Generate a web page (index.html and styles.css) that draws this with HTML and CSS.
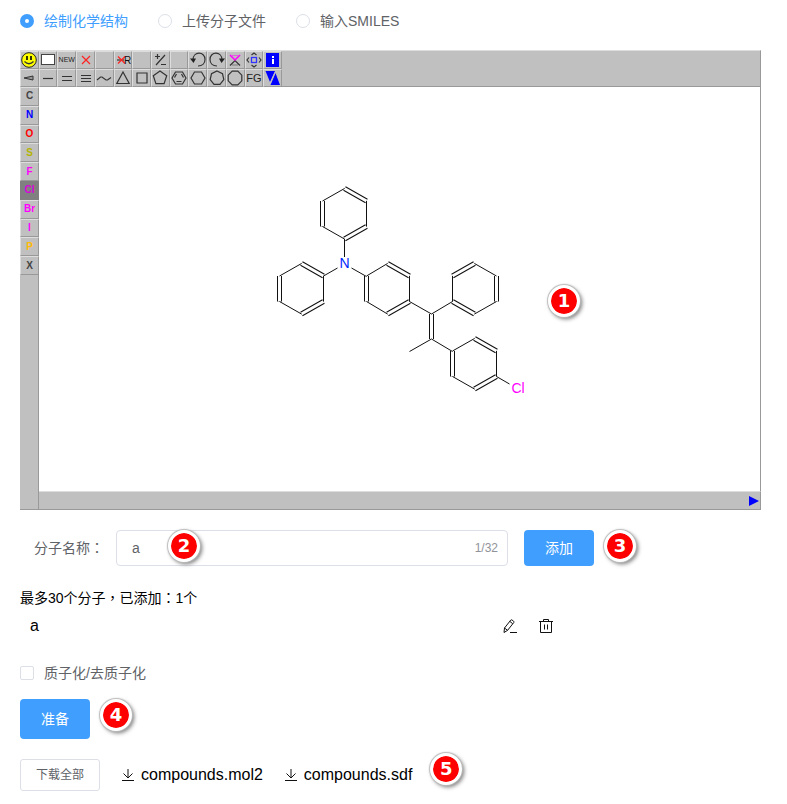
FILE: index.html
```html
<!DOCTYPE html>
<html lang="zh-CN">
<head>
<meta charset="utf-8">
<meta name="viewport" content="width=device-width, initial-scale=1">
<title>分子准备</title>
<link rel="stylesheet" href="styles.css">
</head>
<body>
<main class="page">
  <div class="radios">
    <label class="choice"><input type="radio" name="source" checked><span>绘制化学结构</span></label>
    <label class="choice"><input type="radio" name="source"><span>上传分子文件</span></label>
    <label class="choice"><input type="radio" name="source"><span>输入SMILES</span></label>
  </div>

  <section class="editor">
    <div class="editor-top">
      <div class="tools">
        <button type="button" class="tool" aria-label="SMILES"><svg viewBox="0 0 18 18"><circle cx="9" cy="9" r="7.3" fill="#ff0" stroke="#222"/><path d="M7 5v4M11 5v4" stroke="#000" stroke-width="1.6"/><path d="M4.5 10.5q4.5 4.500 9 0" class="ln"/></svg></button>
        <button type="button" class="tool" aria-label="Query"><svg viewBox="0 0 18 18"><rect x="2.500" y="3.500" width="13" height="10" fill="#fff" stroke="#444"/></svg></button>
        <button type="button" class="tool tiny">NEW</button>
        <button type="button" class="tool" aria-label="Clear"><svg viewBox="0 0 18 18"><path d="M5 5l8 8M13 5l-8 8" class="red"/></svg></button>
        <span class="tool"></span>
        <button type="button" class="tool" aria-label="Delete group"><svg viewBox="0 0 18 18"><path d="M3 9h7" class="ln"/><path d="M4 5.500l7 7M11 5.500l-7 7" class="red"/><text x="10" y="13" class="glyph">R</text></svg></button>
        <span class="tool"></span>
        <button type="button" class="tool" aria-label="Charge"><svg viewBox="0 0 18 18"><path d="M14 4L5 14M4 5.500h5M6.500 3v5M10 13.500h5" class="ln"/></svg></button>
        <span class="tool"></span>
        <button type="button" class="tool" aria-label="Undo"><svg viewBox="0 0 18 18"><path d="M4 9C4 0 16 0 16 8.500C16 12 13.500 15 9 15" class="ln"/><path d="M1 7.500h6L4.500 12z" fill="#222"/></svg></button>
        <button type="button" class="tool" aria-label="Redo"><svg viewBox="0 0 18 18"><path d="M14 9C14 0 2 0 2 8.500C2 12 4.500 15 9 15" class="ln"/><path d="M17 7.500h-6L13.500 12z" fill="#222"/></svg></button>
        <button type="button" class="tool" aria-label="Spiro"><svg viewBox="0 0 18 18"><path d="M4 14.500L9 9.500l5 5" class="ln"/><path d="M4 4l5 5 5-5" fill="none" stroke="#f0f" stroke-width="1.500"/><path d="M6.500 4.500h5" stroke="#f0f" stroke-dasharray="1 1"/><path d="M6.500 14h5" class="ln" stroke-dasharray="1 1"/></svg></button>
        <button type="button" class="tool" aria-label="Move"><svg viewBox="0 0 18 18"><rect x="6.500" y="6.500" width="5" height="5" fill="none" stroke="#33f" stroke-width="1.300"/><path d="M6.500 4L9 2l2.500 2M6.500 14L9 16l2.500-2M4 6.500L2 9l2 2.500M14 6.500L16 9l-2 2.500" class="ln"/></svg></button>
        <button type="button" class="tool" aria-label="Info"><svg viewBox="0 0 18 18"><path d="M2 2h13v14H2z" fill="#00f"/><path d="M9 5v2M9 8v5" stroke="#fff" stroke-width="2"/></svg></button>

        <button type="button" class="tool" aria-label="Stereo bond"><svg viewBox="0 0 18 18"><path d="M4 9l9-2v4z" fill="#999" stroke="#333"/></svg></button>
        <button type="button" class="tool" aria-label="Single bond"><svg viewBox="0 0 18 18"><path d="M4 9.500h10" class="ln"/></svg></button>
        <button type="button" class="tool" aria-label="Double bond"><svg viewBox="0 0 18 18"><path d="M4 7.500h10M4 11.500h10" class="ln"/></svg></button>
        <button type="button" class="tool" aria-label="Triple bond"><svg viewBox="0 0 18 18"><path d="M4 6.500h10M4 9.500h10M4 12.500h10" class="ln"/></svg></button>
        <button type="button" class="tool" aria-label="Chain"><svg viewBox="0 0 18 18"><path d="M2 11l3.500-3h1.500l4 3h1.500L16 8.500" class="ln"/></svg></button>
        <button type="button" class="tool" aria-label="Ring 3"><svg viewBox="0 0 18 18"><path d="M9 3l6.200 11.500H2.800z" class="ln"/></svg></button>
        <button type="button" class="tool" aria-label="Ring 4"><svg viewBox="0 0 18 18"><path d="M4 4h10v10H4z" class="ln"/></svg></button>
        <button type="button" class="tool" aria-label="Ring 5"><svg viewBox="0 0 18 18"><path d="M9 2l6.700 4.800-2.600 7.900H4.900L2.300 6.800z" class="ln"/></svg></button>
        <button type="button" class="tool" aria-label="Benzene"><svg viewBox="0 0 18 18"><path d="M16 9l-3.500-6h-7L2 9l3.500 6h7zM4.500 8.500l2-3.500M11.500 5l2 3.500M6.500 12.500h5" class="ln"/></svg></button>
        <button type="button" class="tool" aria-label="Ring 6"><svg viewBox="0 0 18 18"><path d="M16 9l-3.500-6h-7L2 9l3.500 6h7z" class="ln"/></svg></button>
        <button type="button" class="tool" aria-label="Ring 7"><svg viewBox="0 0 18 18"><path d="M9 2l5.500 2.600 1.300 6-3.800 4.700H6l-3.800-4.700 1.300-6z" class="ln"/></svg></button>
        <button type="button" class="tool" aria-label="Ring 8"><svg viewBox="0 0 18 18"><path d="M6.200 2.200h5.600l4 4v5.600l-4 4H6.200l-4-4V6.200z" class="ln"/></svg></button>
        <button type="button" class="tool">FG</button>
        <button type="button" class="tool" aria-label="JME"><svg viewBox="0 0 18 18"><path d="M1.500 2h9.500L6 13zM6.500 16H16L11.500 4z" fill="#00f"/><path d="M11.500 2.500L6 15" stroke="#c0c0c0"/></svg></button>
      </div>
    </div>
    <div class="editor-side">
      <div class="atoms">
        <button type="button" class="tool atom">C</button>
        <button type="button" class="tool atom n">N</button>
        <button type="button" class="tool atom o">O</button>
        <button type="button" class="tool atom s">S</button>
        <button type="button" class="tool atom hal">F</button>
        <button type="button" class="tool atom hal active">Cl</button>
        <button type="button" class="tool atom hal">Br</button>
        <button type="button" class="tool atom hal">I</button>
        <button type="button" class="tool atom p">P</button>
        <button type="button" class="tool atom">X</button>
      </div>
    </div>
    <div class="canvas">
      <svg viewBox="39 87 721 404" role="img" aria-label="molecule">
        <defs>
          <path id="double-bonds" d="M344.500 188.500l22 12.500M366.500 226.500l-22 12.500M322.500 226.500V201
            M301.500 263.500l22 12.500M323.500 301.500l-22 12.500M279.500 301.500V276
            M387.500 263.500l22 12.500M409.500 301.500l-22 12.500M366.500 301.500V276
            M452.500 276l22-12.500M496.500 276v25.500M474.500 314l-22-12.500
            M474.500 338.500l22 12.500M496.500 376.500l-22 12.500M452.500 376.500V351
            M431.500 314v25"/>
        </defs>
        <use href="#double-bonds" class="bond-outer"/>
        <use href="#double-bonds" class="bond-inner"/>
        <path class="bond" d="M322.500 201l22-12.500M366.500 201v25.500M344.500 239l-22-12.500M344.500 239v18
          M279.500 276l22-12.500M323.500 276v25.500M301.500 314l-22-12.500M323.500 276l14-8
          M351.500 268l15 8.500M366.500 276l21-12.500M409.500 276v25.500M387.500 314l-21-12.500
          M409.500 301.500l22 12.500 21-12.500M452.500 301.500V276M474.500 263.500l22 12.500M496.500 301.500l-22 12.500
          M409.500 351.500l22-12.500 21 12.500M452.500 351l22-12.500M496.500 351v25.500M474.500 389l-22-12.500M496.500 376.500l13 7.500"/>
        <text x="344.500" y="268" text-anchor="middle" class="atom-n">N</text>
        <text x="511.500" y="393" class="atom-cl">Cl</text>
      </svg>
      <span class="badge badge-canvas">1</span>
    </div>
    <div class="editor-status"><svg viewBox="0 0 10 10"><path d="M0 0l10 5-10 5z" fill="#00f"/></svg></div>
  </section>

  <form class="name-row">
    <label class="name-label" for="mol-name">分子名称<span class="punct" lang="zh-TW">：</span></label>
    <div class="name-box">
      <input id="mol-name" type="text" value="a" maxlength="32">
      <span class="count">1/32</span>
      <span class="badge badge-name">2</span>
    </div>
    <div class="marked">
      <button type="button" class="btn primary">添加</button>
      <span class="badge">3</span>
    </div>
  </form>

  <p class="summary">最多30个分子<span class="punct" lang="zh-TW">，</span>已添加<span class="punct" lang="zh-TW">：</span>1个</p>
  <div class="item">
    <span>a</span>
    <div class="item-actions">
      <button type="button" class="icon-btn" aria-label="编辑"><svg viewBox="0 0 14 14"><path d="M1.500 9L7.700 1.200Q8.300.5 9 1l1.600 1.200q.7.600.2 1.300L4.600 11.300 1 13.500zM6.800 2.400l2.900 2.300M1.500 9l3.100 2.300M7 13.500h7"/></svg></button>
      <button type="button" class="icon-btn" aria-label="删除"><svg viewBox="0 0 14 14"><path d="M0 2.500h14M4.500 2.500v-2h5v2M1.500 2.500v11h11v-11M5.500 5.500v5M8.500 5.500v5"/></svg></button>
    </div>
  </div>

  <label class="choice protonate"><input type="checkbox"><span>质子化/去质子化</span></label>

  <div class="marked">
    <button type="button" class="btn primary tall">准备</button>
    <span class="badge">4</span>
  </div>

  <div class="downloads">
    <button type="button" class="btn plain">下载全部</button>
    <a href="#mol2"><svg viewBox="0 0 14 14"><path d="M1 12.500h12M7 1v9M2.500 5.500L7 10l4.500-4.500"/></svg>compounds.mol2</a>
    <a href="#sdf"><svg viewBox="0 0 14 14"><path d="M1 12.500h12M7 1v9M2.500 5.500L7 10l4.500-4.500"/></svg>compounds.sdf<span class="badge badge-file">5</span></a>
  </div>
</main>
</body>
</html>
```
FILE: styles.css
```css
* { box-sizing: border-box; }

body {
  margin: 0;
  background: #fff;
  color: #000;
  font: 14px/20px "Liberation Sans", "Noto Sans CJK SC", sans-serif;
}

button, input { font: inherit; }
button { padding: 0; cursor: pointer; }

/* Full-width punctuation centred in its box */
.punct { font-family: "Noto Sans CJK TC", sans-serif; line-height: 1; }

.page { padding: 11px 26px 12px 20px; }

/* Radio and checkbox labels */
.radios { display: flex; flex-wrap: wrap; gap: 30px; margin-bottom: 19px; }
.choice { display: flex; align-items: center; gap: 10px; color: #606266; }
.choice input {
  appearance: none;
  width: 14px;
  height: 14px;
  margin: 0;
  border: 1px solid #dcdfe6;
  border-radius: 2px;
  background: #fff;
}
.choice input[type="radio"] { border-radius: 50%; }
.choice input[type="radio"]:checked { border: 5px solid #409eff; }
.choice input:checked + span { color: #409eff; }

/* Structure editor */
.editor {
  display: grid;
  grid-template: 37px auto 19px / 19px 1fr;
  margin-bottom: 20px;
}
.editor-top, .editor-side, .editor-status { background: #c0c0c0; }
.editor-top {
  grid-column: 1 / 3;
  border-top: 1px solid #ddd;
  border-right: 1px solid #999;
  border-bottom: 1px solid #999;
}
.tools {
  display: grid;
  grid-template: repeat(2, 18px) / repeat(14, 1fr);
  width: 262px;
}
.editor-side {
  grid-row: 2 / 4;
  border-right: 1px solid #999;
  border-bottom: 1px solid #999;
}
.atoms { display: grid; grid-template-rows: repeat(10, 1fr); height: 188px; margin-right: -1px; }
.tool {
  display: flex;
  align-items: center;
  justify-content: center;
  min-width: 0;
  overflow: hidden;
  border: 1px solid;
  border-color: #ddd #999 #999 #ddd;
  background: #c0c0c0;
  color: #222;
  font-size: 11px;
  line-height: 12px;
}
.tool svg { flex: none; width: 18px; height: 18px; }
.tiny { font-size: 7px; }
.ln { fill: none; stroke: #333; stroke-width: 1.2; }
.red { fill: none; stroke: #f22; stroke-width: 1.2; }
.glyph { font-size: 10px; fill: #111; }
.atom { color: #444; font-size: 10px; font-weight: bold; }
.n { color: #00f; }
.o { color: #f00; }
.s { color: #b4b400; }
.hal { color: #f0f; }
.p { color: #fb0; }
.active { background: #808080; border-color: #808080; color: #d0d; }

.canvas { position: relative; border-right: 1px solid #999; }
.canvas svg { display: block; width: 100%; height: 404px; }
.bond, .bond-outer, .bond-inner { fill: none; stroke: #111; }
.bond-outer { stroke-width: 5; }
.bond-inner { stroke: #fff; stroke-width: 3; }
.atom-n { fill: #0028ff; font-size: 14px; }
.atom-cl { fill: #f0f; font-size: 14px; }

.editor-status {
  display: flex;
  align-items: center;
  justify-content: flex-end;
  padding-right: 1px;
  border-top: 1px solid #ddd;
  border-bottom: 1px solid #999;
  border-right: 1px solid #999;
}
.editor-status svg { width: 10px; height: 10px; }

/* Numbered step markers */
.badge {
  position: absolute;
  top: 0;
  left: calc(100% + 10px);
  width: 32px;
  height: 32px;
  border: 3px solid #fff;
  border-radius: 50%;
  background: #f00;
  background-clip: padding-box;
  box-shadow: 0 0 1px 1px #bbb, 2px 2px 4px 0 #777;
  color: #fff;
  font: bold 18px/26px "DejaVu Sans", sans-serif;
  text-align: center;
}
.badge-canvas { top: 198px; left: 509px; }
.badge-name { left: 52px; }
.badge-file { top: -12px; left: calc(100% + 18px); }
.marked { position: relative; width: fit-content; }

/* Name form */
.name-row { display: flex; align-items: center; margin-bottom: 22px; }
.name-label { flex: none; width: 96px; padding-left: 14px; color: #606266; }
.name-box { position: relative; flex: 0 1 392px; margin-right: 16px; }
.name-box input {
  display: block;
  width: 100%;
  height: 36px;
  padding: 0 50px 0 15px;
  border: 1px solid #dcdfe6;
  border-radius: 4px;
  color: #606266;
}
.count {
  position: absolute;
  top: 8px;
  right: 10px;
  color: #909399;
  font-size: 12px;
}

.btn {
  display: block;
  height: 36px;
  border: 0;
  border-radius: 4px;
}
.primary { width: 70px; background: #409eff; color: #fff; }
.tall { height: 40px; }
.plain {
  width: 80px;
  height: 32px;
  border: 1px solid #dcdfe6;
  border-radius: 3px;
  background: #fff;
  color: #606266;
  font-size: 12px;
}

/* Added molecules */
.summary { margin: 0 0 8px; }
.item {
  display: flex;
  align-items: center;
  justify-content: space-between;
  max-width: 533px;
  padding-left: 10px;
  margin-bottom: 27px;
  font-size: 16px;
}
.item-actions { display: flex; gap: 22px; }
.icon-btn { display: block; border: 0; background: none; }
.icon-btn svg { display: block; width: 14px; height: 14px; }
.icon-btn path, .downloads path { fill: none; stroke: #111; }

.protonate { width: fit-content; margin-bottom: 16px; }

/* Result files */
.downloads {
  display: flex;
  align-items: center;
  gap: 21px;
  margin-top: 20px;
  font-size: 16px;
}
.downloads a {
  position: relative;
  display: flex;
  align-items: center;
  gap: 6px;
  color: #000;
  text-decoration: none;
}
.downloads a svg { width: 14px; height: 14px; }
```
